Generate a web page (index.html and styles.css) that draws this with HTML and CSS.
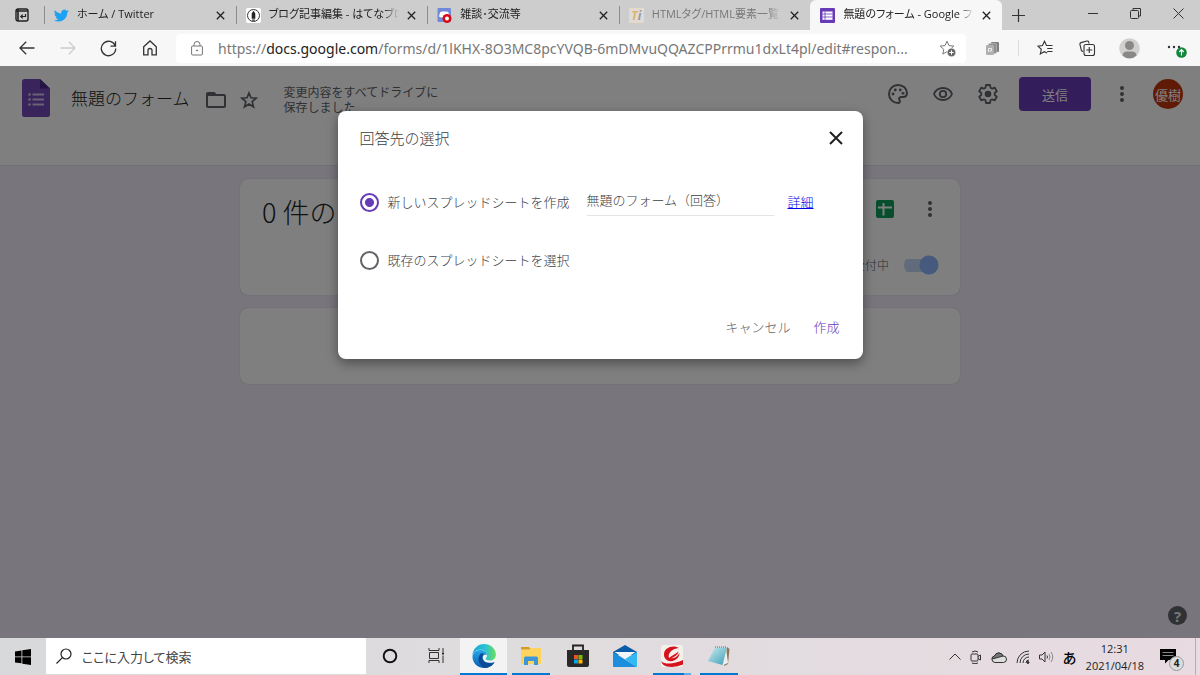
FILE: index.html
```html
<!DOCTYPE html>
<html lang="ja">
<head>
<meta charset="utf-8">
<title>無題のフォーム - Google フォーム</title>
<link rel="stylesheet" href="styles.css">
</head>
<body>
<header class="tabstrip">
  <button class="tab-actions" aria-label="タブ操作"><svg width="14" height="14" viewBox="0 0 14 14"><rect x="1" y="1" width="12" height="12" rx="2" fill="none" stroke="#222" stroke-width="1.4"/><path d="M1 3h12M3 1v12" stroke="#222" stroke-width="1.600"/><path d="M10.500 6v2.500H6M7.700 6.600 5.800 8.500l1.900 1.900" fill="none" stroke="#222" stroke-width="1.200"/></svg></button>
  <div class="tabs">
    <div class="tab">
      <svg class="favicon" viewBox="0 0 24 24"><path fill="#1da1f2" d="M23.6 4.9c-.8.4-1.700.6-2.700.8 1-.6 1.700-1.500 2.100-2.600-.9.500-1.900.9-3 1.100a4.800 4.800 0 0 0-8.200 4.400C7.700 8.400 4 6.500 1.600 3.500a4.800 4.800 0 0 0 1.500 6.400c-.8 0-1.500-.2-2.200-.6v.1c0 2.300 1.700 4.200 3.900 4.700-.7.200-1.400.2-2.200.1.600 1.900 2.400 3.300 4.500 3.300A9.700 9.700 0 0 1 0 19.500 13.700 13.700 0 0 0 7.400 21.700c9 0 14-7.400 13.800-14.300.9-.7 1.700-1.500 2.400-2.500z"/></svg>
      <span class="tab-title">ホーム / Twitter</span>
      <button class="tab-close" aria-label="閉じる"><svg width="9" height="9" viewBox="0 0 9 9"><path d="m.8.8 7.400 7.400M8.200.8.8 8.200"/></svg></button>
    </div>
    <div class="tab">
      <svg class="favicon" viewBox="0 0 15 15"><rect width="15" height="15" rx="2" fill="#fff"/><circle cx="7.500" cy="7.500" r="6" fill="none" stroke="#333"/><path fill="#222" d="M7.500 2.700 9.300 5.500v5.300H5.700V5.500zM6.200 11.500h2.600v1.300H6.200z"/></svg>
      <span class="tab-title">ブログ記事編集 - はてなブログ</span>
      <button class="tab-close" aria-label="閉じる"><svg width="9" height="9" viewBox="0 0 9 9"><path d="m.8.8 7.400 7.400M8.200.8.8 8.200"/></svg></button>
    </div>
    <div class="tab">
      <svg class="favicon" viewBox="0 0 15 15"><rect x=".5" width="13.500" height="14" rx="1" fill="#7289da"/><path fill="#fff" d="M3 4.500Q5 3 6 3.500h3q2 0 2.500 1l1 4-2 1H4l-2-1z"/><circle cx="10" cy="10.500" r="4.500" fill="#d90b12"/><circle cx="10" cy="10.500" r="2" fill="#fff"/></svg>
      <span class="tab-title">雑談･交流等</span>
      <button class="tab-close" aria-label="閉じる"><svg width="9" height="9" viewBox="0 0 9 9"><path d="m.8.8 7.400 7.400M8.200.8.8 8.200"/></svg></button>
    </div>
    <div class="tab tab-sleeping">
      <span class="favicon ti-icon"><i>T</i><em>i</em></span>
      <span class="tab-title">HTMLタグ/HTML要素一覧</span>
      <button class="tab-close" aria-label="閉じる"><svg width="9" height="9" viewBox="0 0 9 9"><path d="m.8.8 7.400 7.400M8.200.8.8 8.200"/></svg></button>
    </div>
    <div class="tab tab-active">
      <svg class="favicon" viewBox="0 0 15 15"><rect width="15" height="15" rx="1" fill="#673ab7"/><path d="M2.500 3.500h10v8.300h-10z" fill="#fff"/><path d="M2.500 6h10M2.500 9h10M5 3.500v8.300" stroke="#673ab7" stroke-width=".8"/></svg>
      <span class="tab-title">無題のフォーム - Google フォーム</span>
      <button class="tab-close" aria-label="閉じる"><svg width="9" height="9" viewBox="0 0 9 9"><path d="m.8.8 7.400 7.400M8.200.8.8 8.200"/></svg></button>
    </div>
  </div>
  <button class="new-tab" aria-label="新しいタブ"><svg width="13" height="13" viewBox="0 0 13 13"><path d="M6.500 0v13M0 6.500h13" stroke="#333" stroke-width="1.200"/></svg></button>
  <div class="window-controls">
    <button aria-label="最小化"><svg width="10" height="10" viewBox="0 0 10 10"><path d="M0 4.500h10"/></svg></button>
    <button aria-label="元に戻す"><svg width="11" height="11" viewBox="0 0 11 11"><rect x=".5" y="2.500" width="8" height="8" rx="1"/><path d="M3 2.500v-2h7.500v7.500h-2"/></svg></button>
    <button aria-label="閉じる"><svg width="11" height="11" viewBox="0 0 11 11"><path d="m.5.500 10 10M10.500.5l-10 10"/></svg></button>
  </div>
</header>

<nav class="toolbar">
  <div class="nav-buttons">
    <button aria-label="戻る"><svg width="16" height="14" viewBox="0 0 16 14"><path d="M15.500 7H1M7.200.8 1 7l6.200 6.200"/></svg></button>
    <button class="disabled" aria-label="進む" disabled><svg width="16" height="14" viewBox="0 0 16 14"><path d="M.5 7H15M8.800.8 15 7l-6.200 6.200"/></svg></button>
    <button aria-label="更新"><svg width="17" height="17" viewBox="0 0 17 17"><path d="M15.300 6.100A7.200 7.200 0 1 0 15.700 8.500M15.500 1.200v5h-5"/></svg></button>
    <button aria-label="ホーム"><svg width="16" height="16" viewBox="0 0 16 16"><path d="M1.700 6.800 8 1l6.300 5.800v8H10V10.500a2 2 0 0 0-4 0v4.300H1.700z"/></svg></button>
  </div>
  <div class="address">
    <svg width="12" height="15" viewBox="0 0 12 15" fill="none" stroke="#757575"><rect x=".6" y="5" width="10.800" height="9" rx="1"/><path d="M3 5V3.500a3 3 0 0 1 6 0V5"/><circle cx="6" cy="9.500" r=".6" fill="#555"/></svg>
    <span class="url">https://<b>docs.google.com</b>/forms/d/1lKHX-8O3MC8pcYVQB-6mDMvuQQAZCPPrrmu1dxLt4pl/edit#respon...</span>
    <button aria-label="お気に入りに追加"><svg width="17" height="17" viewBox="0 0 17 17"><path fill="none" stroke="#777" d="M8 1.200 10 5.600l4.800.5-3.600 3.300 1 4.700L8 11.700l-4.200 2.400 1-4.700L1.200 6.100 6 5.600z"/><circle cx="12.500" cy="12.500" r="4.300" fill="#666" stroke="#fff" stroke-width=".6"/><path d="M12.500 10.300v4.400M10.300 12.500h4.400" stroke="#fff"/></svg></button>
  </div>
  <div class="tools">
    <button class="ext" aria-label="拡張機能"><svg width="15" height="15" viewBox="0 0 15 15"><rect x="6" y="1" width="8" height="10" rx="1" fill="#808080"/><rect x="3.500" y="2.500" width="8" height="10" rx="1" fill="#909090" stroke="#ccc" stroke-width=".5"/><rect x="1" y="4" width="8" height="10" rx="1" fill="#b0b0b0"/><path d="M3.500 11V7.500h3V10h-2" fill="none" stroke="#eee"/></svg></button>
    <button class="favs" aria-label="お気に入り"><svg width="17" height="16" viewBox="0 0 17 16" fill="none" stroke="#333" stroke-width="1.100"><path d="M10.200 13 7.200 11.700 3.300 14l1-4.700L.9 6.100l4.600-.6L7.500 1.200l2 4.300h6M10.200 8.500h5.300M10.200 11.500h5.300"/></svg></button>
    <button class="collections" aria-label="コレクション"><svg width="17" height="17" viewBox="0 0 17 17" fill="none" stroke="#333" stroke-width="1.100"><path d="M4 11.500 2.500 10.800.9 4.300Q.7 3 2 2.600L8 1q1.400-.2 1.700 1l.3 1.500"/><rect x="5" y="4.500" width="10.500" height="11" rx="2"/><path d="M10.250 7v6M7.250 10h6"/></svg></button>
    <button class="profile" aria-label="プロファイル"><svg width="21" height="21" viewBox="0 0 21 21"><circle cx="10.500" cy="10.500" r="10.300" fill="#d2d0ce"/><circle cx="10.500" cy="7.500" r="4.500" fill="#8a8886"/><path fill="#8a8886" d="M3.500 17.500Q4 13.500 8 13.500h5q4 0 4.500 4a10 10 0 0 1-14 0z"/></svg></button>
    <button class="more" aria-label="設定など"><svg width="20" height="20" viewBox="0 0 20 20"><circle cx="2" cy="9" r="1.200" fill="#333"/><circle cx="7" cy="9" r="1.200" fill="#333"/><circle cx="12" cy="9" r="1.200" fill="#333"/><circle cx="14.500" cy="14.500" r="5.300" fill="#118739"/><path d="M14.500 17.500v-5.500m-2.300 2 2.300-2.300 2.300 2.300" fill="none" stroke="#fff" stroke-width="1.200"/></svg></button>
  </div>
</nav>

<main class="page">
  <div class="app-header">
    <svg class="logo" width="28" height="38" viewBox="0 0 28 38"><path fill="#7248b9" d="M2.500 0H18l10 9.500V35.500q0 2.500-2.500 2.500h-23Q0 38 0 35.500v-33Q0 0 2.500 0z"/><path fill="#4b2a86" d="M18 0l10 9.500H18z"/><g fill="#d4c6ea"><circle cx="7.500" cy="15.500" r="1.300"/><circle cx="7.500" cy="20.500" r="1.300"/><circle cx="7.500" cy="25.500" r="1.300"/><path d="M10.500 14.500h11.500v2H10.500zM10.500 19.500h11.500v2H10.500zM10.500 24.500h11.500v2H10.500z"/></g></svg>
    <h1 class="doc-title">無題のフォーム</h1>
    <button class="icon-btn" aria-label="フォルダに移動"><svg width="20" height="16" viewBox="0 0 20 16"><path fill="none" stroke="#5f6368" stroke-width="2" d="M1 2.500V14q0 1 1 1h16q1 0 1-1V4q0-1-1-1h-8L8 1H2Q1 1 1 2z"/><path d="M1 1h7l2 3H1z" fill="#5f6368"/></svg></button>
    <button class="icon-btn" aria-label="スターを付ける"><svg width="18" height="18" viewBox="0 0 18 18"><path fill="none" stroke="#5f6368" stroke-width="1.700" d="m9 2 2 4.800 5.200.4-4 3.400 1.300 5.200L9 13l-4.500 2.800 1.300-5.200-4-3.400L7 6.800z"/></svg></button>
    <p class="save-state">変更内容をすべてドライブに<br>保存しました</p>
    <div class="header-actions">
      <button class="icon-btn" aria-label="テーマ"><svg width="20" height="20" viewBox="0 0 20 20"><path fill="none" stroke="#5f6368" stroke-width="2" d="M10 1C4.800 1 1 5 1 10s4 9 9 9c1.700 0 2.500-1.800 1.500-3-1-1.300-.1-3 1.500-3h2c2.300 0 4-1.600 4-4 0-4.500-4-8-9-8z"/><g fill="#5f6368"><circle cx="5" cy="10" r="1.400"/><circle cx="7.300" cy="6" r="1.400"/><circle cx="12.300" cy="6" r="1.400"/><circle cx="15" cy="9.300" r="1.400"/></g></svg></button>
      <button class="icon-btn" aria-label="プレビュー"><svg width="20" height="14" viewBox="0 0 20 14"><path fill="none" stroke="#5f6368" stroke-width="1.800" d="M1 7c1.500-3.700 5-6 9-6s7.500 2.300 9 6c-1.500 3.700-5 6-9 6S2.500 10.700 1 7z"/><circle cx="10" cy="7" r="3.200" fill="none" stroke="#5f6368" stroke-width="1.800"/></svg></button>
      <button class="icon-btn" aria-label="設定"><svg width="20" height="20" viewBox="0 0 20 20"><path fill="none" stroke="#5f6368" stroke-width="1.800" stroke-linejoin="round" d="M8 1h4l.5 2.700 1.700 1 2.600-1 2 3.500L16.700 9v2l2.100 1.800-2 3.500-2.600-1-1.700 1L12 19H8l-.5-2.700-1.700-1-2.600 1-2-3.500L3.300 11V9L1.200 7.200l2-3.500 2.600 1 1.700-1z"/><circle cx="10" cy="10" r="3.300" fill="#5f6368"/></svg></button>
      <button class="send">送信</button>
      <button class="icon-btn dots" aria-label="その他"><svg width="4" height="16" viewBox="0 0 4 16" fill="#5f6368"><circle cx="2" cy="2" r="2"/><circle cx="2" cy="8" r="2"/><circle cx="2" cy="14" r="2"/></svg></button>
      <button class="avatar">優樹</button>
    </div>
  </div>

  <div class="content">
    <section class="card summary">
      <div class="summary-top">
        <h2>0 件の回答</h2>
        <button class="icon-btn" aria-label="スプレッドシート"><svg width="18" height="18" viewBox="0 0 18 18"><rect width="18" height="18" rx="2" fill="#0f9d58"/><path d="M2 7.500h14M7.500 3v12.500" stroke="#fff" stroke-width="2"/></svg></button>
        <button class="icon-btn" aria-label="その他"><svg width="4" height="16" viewBox="0 0 4 16" fill="#5f6368"><circle cx="2" cy="2" r="2"/><circle cx="2" cy="8" r="2"/><circle cx="2" cy="14" r="2"/></svg></button>
      </div>
      <label class="accepting">回答を受付中 <input class="switch" type="checkbox" checked></label>
    </section>
    <section class="card waiting"></section>
  </div>
  <button class="help" aria-label="ヘルプ">?</button>

  <div class="scrim">
    <form class="dialog" role="dialog" aria-labelledby="dlg-title">
      <div class="dialog-head">
        <h2 id="dlg-title">回答先の選択</h2>
        <button type="button" aria-label="閉じる"><svg width="14" height="14" viewBox="0 0 14 14"><path d="m1 1 12 12M13 1 1 13" stroke="#222" stroke-width="2"/></svg></button>
      </div>
      <div class="option">
        <input type="radio" name="dest" id="new-sheet" checked><label for="new-sheet">新しいスプレッドシートを作成</label>
        <input class="sheet-name" type="text" value="無題のフォーム（回答）" aria-label="スプレッドシート名">
        <a href="#">詳細</a>
      </div>
      <div class="option">
        <input type="radio" name="dest" id="old-sheet"><label for="old-sheet">既存のスプレッドシートを選択</label>
      </div>
      <div class="dialog-actions">
        <button type="button" class="cancel">キャンセル</button>
        <button type="button" class="create">作成</button>
      </div>
    </form>
  </div>
</main>

<footer class="taskbar">
  <button class="start" aria-label="スタート"><svg width="16" height="16" viewBox="0 0 16 16"><path d="M0 2.400 6.500 1.500v6H0zM7.300 1.300 16 0v7.500H7.300zM0 8.300h6.500v6L0 13.500zM7.300 8.300H16V16l-8.700-1.300z"/></svg></button>
  <div class="search">
    <svg width="16" height="16" viewBox="0 0 16 16" fill="none" stroke="#222" stroke-width="1.200"><circle cx="10" cy="6" r="5"/><path d="M6.400 9.600.5 15.500"/></svg>
    <input type="text" placeholder="ここに入力して検索" aria-label="検索">
  </div>
  <div class="apps">
    <button aria-label="Cortana"><svg width="16" height="16" viewBox="0 0 16 16"><circle cx="8" cy="8" r="6.300" fill="none" stroke="#111" stroke-width="1.900"/></svg></button>
    <button aria-label="タスクビュー"><svg width="17" height="15" viewBox="0 0 17 15" fill="none" stroke="#333"><path d="M1 0v2.500h10V0M1 15v-2.500h10V15M1.500 4.500h9v6h-9zM15 0v4M15 7.500V15"/><path d="M14 4.500h2v2h-2z" fill="#222" stroke="none"/></svg></button>
    <button class="running focused" aria-label="Microsoft Edge"><svg width="24" height="24" viewBox="0 0 24 24"><defs><linearGradient id="e1"><stop offset="0" stop-color="#16a5dc"/><stop offset=".55" stop-color="#2bc3d4"/><stop offset="1" stop-color="#6bde5a"/></linearGradient><linearGradient id="e2" x2="0" y2="1"><stop offset="0" stop-color="#27a7e8"/><stop offset="1" stop-color="#0b5cb4"/></linearGradient></defs><path fill="url(#e2)" d="M.5 12C1.500 7.500 5 6 8.500 6c4 0 6.500 2.300 6.500 5.200-3-1.400-5 1-4 3.800 1.300 4 6.500 4.300 11.500 3.200C20.500 22 16.500 24 12 24 5.500 24 0 18.500.5 12z"/><path fill="#0c4a96" d="M9 9.500c-4 3.200-3.500 11.500 4 14.400 4.500-.4 7.800-2.700 9.500-5.700-1.700 1-10.300 2.700-12-3.400-.6-2 .2-3.900 1.500-4.700-1-.8-2-1-3-.6z"/><path fill="url(#e1)" d="M.3 11.500C1 4.500 6 0 12 0c6.500 0 11.900 4.800 11.900 10.500 0 4-3 6-6 6-2.300 0-4.300-.8-4.300-1.700 0-.8 1.500-1.500 1.500-3.500 0-3-3-5.500-6.600-5.500-4 0-7 2-8.200 5.700z"/></svg></button>
    <button class="running" aria-label="エクスプローラー"><svg width="22" height="18" viewBox="0 0 22 18"><path fill="#d89d13" d="M1 0h8l2 2.500H1z"/><path fill="#ffd45c" d="M1 3h8l2-2h10v16H1z"/><path fill="#3c96d8" d="M4 17V11q0-1.500 1.500-1.500h11Q18 9.500 18 11v7h-4v-4H8v4H4z"/></svg></button>
    <button aria-label="Microsoft Store"><svg width="24" height="24" viewBox="0 0 24 24"><path d="M7 7V1.500h10V7" fill="none" stroke="#222" stroke-width="1.800"/><path fill="#292929" d="M1 6h22v15q0 2-2 2H3q-2 0-2-2z"/><path fill="#f25022" d="M8 11h4v4H8z"/><path fill="#7fba00" d="M12.500 11h4v4h-4z"/><path fill="#00a4ef" d="M8 15.500h4v4H8z"/><path fill="#ffb900" d="M12.500 15.500h4v4h-4z"/></svg></button>
    <button aria-label="メール"><svg width="24" height="22" viewBox="0 0 24 22"><path fill="#0b5ca8" d="M0 7 12 0l12 7v3H0z"/><path fill="#1b8fdd" d="M0 7l24 15H1q-1 0-1-1z"/><path fill="#35b7f2" d="M24 7v14q0 1-1 1l-11-8z"/><path fill="#f3f7fa" d="M1.500 7h21L12 14z"/></svg></button>
    <button class="running grouped" aria-label="ウイルスバスター"><svg width="22" height="22" viewBox="0 0 22 22"><rect width="22" height="22" rx="3" fill="#f4f0ea"/><path fill="#d7121d" d="M17.500 3C12-.5 3.500 2.500 3 9c-.3 4.500 3 7.500 7 7.200 5-.4 8.500-4.200 8.500-8.200-2 4-5.500 5.500-8.500 5.200 4-1.200 7-3.700 7.500-6.700-3 3-6.500 3.500-9.500 6.500C6.500 8 11 4 17.500 3z"/><path fill="#d7121d" d="M0 16c4 4 14 3 22-1v4.500q-8 3.500-16 2Q1.500 20.500 0 16z"/></svg></button>
    <button class="running" aria-label="メモ帳"><svg width="22" height="20" viewBox="0 0 22 20"><defs><linearGradient id="np" x2="1" y2="1"><stop offset="0" stop-color="#c9edf2"/><stop offset="1" stop-color="#3f9cb5"/></linearGradient></defs><path fill="#8d7658" d="m19 1 2.500 2L20 18l-4 2z"/><path fill="#eee" d="m18 2 2 15-5 2z"/><path fill="url(#np)" d="M7 1.500h12L14.500 19 0 15z"/><path stroke="#667" stroke-dasharray="1 1" d="M7 1h12"/></svg></button>
  </div>
  <div class="tray">
    <svg width="12" height="7" viewBox="0 0 12 7"><path d="m.5 6.500 5.500-5.500 5.500 5.500"/></svg>
    <svg width="12" height="14" viewBox="0 0 12 14"><rect x="1" y="4" width="7" height="7" rx="1"/><path d="m8 6.500 2.500-1.500v5L8 8.500M2 2q3-2 6 0M2 13q3 1.500 6 0"/></svg>
    <svg width="16" height="12" viewBox="0 0 16 12"><path fill="#ddd" d="M4 11.500a3.300 3.300 0 0 1-.5-6.500A4.500 4.500 0 0 1 12 5a3.200 3.200 0 0 1 .5 6.500z"/><path fill="#777" d="M1 8a3 3 0 0 1 2.500-3A4.500 4.500 0 0 1 12 5L5 7z"/></svg>
    <svg width="14" height="14" viewBox="0 0 14 14"><path d="M1 13A12 12 0 0 1 13 1M4 13a9 9 0 0 1 9-9M7 13a6 6 0 0 1 6-6M10 13a3 3 0 0 1 3-3"/><circle cx="12" cy="12.500" r="1" fill="#222"/></svg>
    <svg width="15" height="12" viewBox="0 0 15 12"><path d="M.5 4h2.500L6 1v10L3 8H.5zM8 4.500q1 1.500 0 3"/><path stroke="#888" d="M10 3q2 3 0 6M12 1q3.500 5 0 10"/></svg>
    <span class="ime">あ</span>
    <div class="clock"><time>12:31</time><time>2021/04/18</time></div>
    <button class="notify" aria-label="通知"><svg width="16" height="15" viewBox="0 0 16 15"><path d="M0 0h16v11H8.500L5 14.500V11H0z"/><path d="M2.500 3.500h11M2.500 6.500h11" stroke="#888"/></svg><span>4</span></button>
  </div>
</footer>
</body>
</html>
```

FILE: styles.css
```css
* { box-sizing: border-box; }

body {
  margin: 0;
  height: 100vh;
  display: flex;
  flex-direction: column;
  overflow: hidden;
  font-family: "Open Sans", "Noto Sans CJK JP", sans-serif;
  color: #222;
}

button {
  border: 0;
  padding: 0;
  margin: 0;
  background: none;
  font: inherit;
  color: inherit;
  display: flex;
  align-items: center;
  justify-content: center;
}

h1, h2, p { margin: 0; font-weight: 300; }

/* Tab strip */
.tabstrip {
  height: 30px;
  flex: none;
  display: flex;
  background: #cdcdcd;
}
.tab-actions { width: 44px; flex: none; }
.tabs { display: flex; flex: 0 1 958px; min-width: 0; }
.tab {
  flex: 1 1 0;
  min-width: 0;
  display: flex;
  align-items: center;
  gap: 8px;
  padding: 0 11px 0 10px;
  font-size: 11px;
  background: linear-gradient(#8c8c8c, #8c8c8c) left center / 1px 18px no-repeat;
}
.favicon { width: 15px; height: 15px; flex: none; }
.tab-title {
  flex: 1;
  overflow: hidden;
  white-space: nowrap;
  line-height: 18px;
  padding-bottom: 2px;
  font-feature-settings: "palt";
  -webkit-mask-image: linear-gradient(90deg, #000 88%, transparent);
  mask-image: linear-gradient(90deg, #000 88%, transparent);
}
.tab-close { width: 9px; height: 20px; flex: none; }
.tab-close path { stroke: #222; stroke-width: 1.3; }
.tab-sleeping .tab-title { color: #777; }
.tab-active { background: #f7f7f7; border-radius: 6px 6px 0 0; }
.ti-icon {
  display: flex;
  align-items: center;
  justify-content: center;
  border: 1px solid #ead9bd;
  background: #dedcd8;
  font-size: 12px;
  font-weight: 700;
}
.ti-icon i { color: #dfb469; }
.ti-icon em { color: #999; }
.new-tab { width: 32px; }
.window-controls { margin-left: auto; display: flex; }
.window-controls button { width: 43px; height: 27px; }
.window-controls path, .window-controls rect { fill: none; stroke: #333; }

/* Address row */
.toolbar {
  height: 36px;
  flex: none;
  display: flex;
  align-items: center;
  background: #f7f7f7;
}
.nav-buttons { display: flex; padding: 0 6px; }
.nav-buttons button { width: 41px; height: 36px; }
.nav-buttons path { fill: none; stroke: #333; stroke-width: 1.3; }
.nav-buttons .disabled path { stroke: #ccc; }
.address {
  flex: 1;
  min-width: 0;
  height: 29px;
  display: flex;
  align-items: center;
  gap: 15px;
  padding: 0 10px 0 15px;
  background: #fff;
  border-radius: 4px;
}
.url {
  flex: 1;
  min-width: 0;
  overflow: hidden;
  text-overflow: ellipsis;
  white-space: nowrap;
  font-family: "Noto Sans", sans-serif;
  font-size: 14px;
  color: #777;
}
.url b { font-weight: 400; color: #222; }
.tools { display: flex; align-items: center; flex: none; padding-right: 2px; }
.tools button { width: 42px; height: 32px; }
.tools .ext {
  width: 53px;
  background: linear-gradient(#ddd, #ddd) right center / 1px 16px no-repeat;
}
.tools .favs { width: 52px; }
.tools .collections { width: 32px; }
.tools .profile { width: 53px; }

/* Form editor */
.page {
  flex: 1;
  min-height: 0;
  position: relative;
  background: #f0ebf8;
  font-family: "Noto Sans CJK JP", sans-serif;
  font-weight: 300;
}
.app-header {
  height: 100px;
  display: flex;
  align-items: flex-start;
  padding: 13px 17px 0 22px;
  background: #fff;
  border-bottom: 1px solid #e2dfe8;
}
.doc-title { margin: 0 16px 0 21px; font-size: 17px; line-height: 38px; }
.app-header > .icon-btn { height: 42px; margin-right: 14px; }
.save-state {
  padding: 5px 0 0 12px;
  font-size: 12px;
  font-weight: 400;
  line-height: 15px;
  color: #5f6368;
}
.header-actions { margin: -2px 0 0 auto; display: flex; align-items: center; }
.header-actions .icon-btn { width: 45px; height: 32px; }
.header-actions .send {
  width: 72px;
  height: 34px;
  margin-left: 9px;
  border-radius: 4px;
  background: #673ab7;
  color: #fff;
  font-size: 13px;
  font-weight: 400;
}
.header-actions .dots { width: 62px; }
.header-actions .avatar {
  width: 30px;
  height: 30px;
  border-radius: 50%;
  background: #bf360c;
  color: #fff;
  font-size: 13px;
  font-weight: 400;
}
.content {
  max-width: 720px;
  margin: 13px auto 0;
  display: flex;
  flex-direction: column;
  gap: 13px;
}
.card { background: #fff; border-radius: 8px; box-shadow: 0 0 1px #aaa; }
.summary {
  height: 116px;
  display: flex;
  flex-direction: column;
  justify-content: space-between;
  padding: 14px 21px 18px 22px;
}
.summary-top { display: flex; align-items: center; }
.summary-top h2 { flex: 1; font-size: 27px; line-height: 38px; }
.summary-top .icon-btn { width: 18px; height: 30px; margin: -7px 0 0 27px; }
.accepting {
  align-self: flex-end;
  display: flex;
  align-items: center;
  gap: 15px;
  font-size: 12px;
  line-height: 24px;
  color: #5f6368;
}
.switch {
  appearance: none;
  width: 35px;
  height: 20px;
  margin: 0;
  border-radius: 10px;
  background:
    radial-gradient(circle at 25px 10px, #8ab4f8 9px, transparent 10px),
    linear-gradient(#c3d6f7, #c3d6f7) left center / 28px 13px no-repeat;
}
.waiting { height: 76px; }
.help {
  position: absolute;
  right: 13px;
  bottom: 13px;
  width: 19px;
  height: 19px;
  border-radius: 50%;
  background: #5f6368;
  color: #eee;
  font: 700 15px "Open Sans", sans-serif;
}

/* Dialog */
.scrim {
  position: absolute;
  inset: 0;
  display: flex;
  justify-content: center;
  align-items: flex-start;
  padding-top: 45px;
  background: rgba(0, 0, 0, 0.5);
}
.dialog {
  width: 525px;
  padding: 12px 20px 16px 22px;
  background: #fff;
  border-radius: 8px;
  box-shadow: 0 4px 12px rgba(0, 0, 0, 0.4);
  font-size: 13px;
  color: #3c4043;
}
.dialog-head {
  display: flex;
  justify-content: space-between;
  align-items: center;
  margin-bottom: 20px;
}
.dialog-head h2 { font-size: 15px; line-height: 30px; }
.option { height: 58px; display: flex; align-items: center; }
.option label, .option a { padding-bottom: 2px; }
.option label { margin-left: 9px; width: 187px; }
.option input[type="radio"] {
  appearance: none;
  width: 19px;
  height: 19px;
  margin: 0;
  border: 2px solid #5f6368;
  border-radius: 50%;
}
.option input[type="radio"]:checked {
  border-color: #673ab7;
  background: radial-gradient(circle, #673ab7 4px, transparent 5px);
}
.sheet-name {
  width: 187px;
  height: 27px;
  margin: 0 14px 0 12px;
  padding: 0 0 4px;
  border: 0;
  border-bottom: 1px solid #e4e4e4;
  outline: 0;
  font: inherit;
  color: inherit;
}
.option a { color: #00e; }
.dialog-actions {
  display: flex;
  justify-content: flex-end;
  gap: 23px;
  padding: 22px 3px 0 0;
  line-height: 32px;
}
.cancel { color: #5f6368; }
.create { color: #673ab7; }

/* Taskbar */
.taskbar {
  height: 37px;
  flex: none;
  display: flex;
  align-items: stretch;
  background: linear-gradient(90deg, #d8d9da, #dfdcde 45%, #e8dbe1);
}
.start { width: 46px; }
.search {
  flex: 0 1 320px;
  display: flex;
  align-items: center;
  gap: 10px;
  margin-bottom: 1px;
  padding-left: 10px;
  background: #fff;
}
.search input {
  flex: 1;
  min-width: 0;
  border: 0;
  padding: 0;
  background: none;
  font: 13px "Noto Sans CJK JP", sans-serif;
  font-feature-settings: "palt";
}
.search input::placeholder { color: #444; }
.apps { display: flex; }
.apps button { width: 47px; border-bottom: 2px solid transparent; }
.apps .running {
  background: linear-gradient(#0078d4, #0078d4) center bottom / 38px 2px no-repeat border-box;
}
.apps .focused { background-color: #f3f3f3; background-size: 47px 2px; }
.apps .grouped {
  background-image: linear-gradient(90deg, #0078d4 31px, #69abe5 31px);
}
.tray {
  margin-left: auto;
  display: flex;
  align-items: center;
  gap: 9px;
  padding-right: 11px;
  border-right: 1px solid #b5adb1;
  margin-right: 4px;
}
.tray > svg { fill: none; stroke: #333; }
.ime { font-size: 14px; font-weight: 500; color: #000; }
.clock {
  display: flex;
  flex-direction: column;
  align-items: center;
  font-size: 11px;
  line-height: 17px;
}
.notify { position: relative; width: 24px; height: 28px; justify-content: flex-start; margin-left: 7px; }
.notify span {
  position: absolute;
  right: 0;
  bottom: 0;
  width: 15px;
  height: 15px;
  border: 1px solid #999;
  border-radius: 50%;
  background: #ddd;
  font-size: 10px;
  font-weight: 700;
  line-height: 13px;
}
```
